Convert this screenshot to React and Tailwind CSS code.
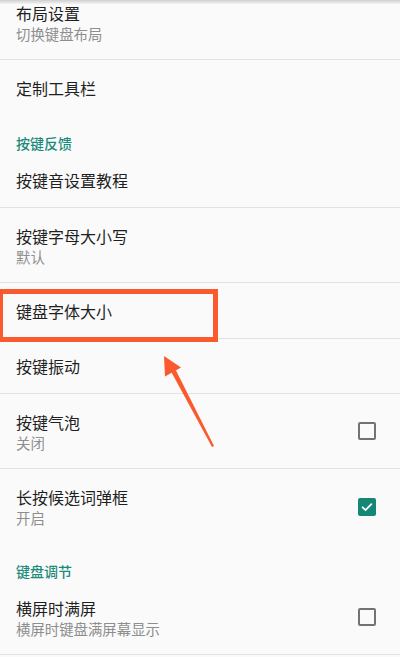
const font = { fontFamily: '"Noto Sans CJK SC", "Noto Sans", sans-serif' }

function Checkbox({ checked }) {
  if (checked) {
    return (
      <div className="flex h-[18px] w-[18px] items-center justify-center rounded-[2px] bg-[#168676]">
        <svg width="14" height="14" viewBox="0 0 24 24" fill="none">
          <path d="M4.5 12.5l5 5 10-10.5" stroke="#ffffff" strokeWidth="3" strokeLinecap="round" strokeLinejoin="round" />
        </svg>
      </div>
    )
  }
  return <div className="h-[18px] w-[18px] rounded-[2px] border-2 border-[#737373]" />
}

function Row({ title, sub, divider = true, check, tall }) {
  const base = divider ? 'border-b border-[#e2e2e2]' : ''
  if (sub) {
    return (
      <div className={`flex h-[75px] items-center pl-4 pr-6 ${base}`}>
        <div className="flex h-full min-w-0 flex-1 flex-col pt-[18px]">
          <div className="text-[16px] leading-[20px] text-[#1f1f1f]">{title}</div>
          <div className="mt-[2px] text-[14.4px] leading-[18px] text-[#8e8e8e]">{sub}</div>
        </div>
        {check !== undefined && <Checkbox checked={check} />}
      </div>
    )
  }
  return (
    <div className={`flex ${tall ? 'h-[56px]' : 'h-[55px]'} items-center pl-4 pr-6 ${base}`}>
      <div className="flex-1 text-[16px] leading-[20px] text-[#1f1f1f]">{title}</div>
    </div>
  )
}

function Header({ label, className }) {
  return (
    <div className={`${className} pl-4 text-[14px] font-medium leading-[16px] text-[#1a8a7b]`}>
      {label}
    </div>
  )
}

export default function App() {
  return (
    <div className="relative h-[657px] w-[400px] overflow-hidden bg-[#fafafa]" style={font}>
      <div className="mt-[-15px]">
        <Row title="布局设置" sub="切换键盘布局" />
        <Row title="定制工具栏" divider={false} />
        <Header label="按键反馈" className="h-[38px] pt-[20px]" />
        <Row title="按键音设置教程" />
        <Row title="按键字母大小写" sub="默认" />
        <Row title="键盘字体大小" tall />
        <Row title="按键振动" />
        <Row title="按键气泡" sub="关闭" check={false} />
        <Row title="长按候选词弹框" sub="开启" check divider={false} />
        <Header label="键盘调节" className="h-[36px] pt-[19px]" />
        <Row title="横屏时满屏" sub="横屏时键盘满屏幕显示" check={false} />
      </div>

      {/* top shadow */}
      <div className="absolute left-0 right-0 top-0 h-[4px] bg-gradient-to-b from-[#cfcfcf] to-[#f3f3f3]" />

      {/* highlight box */}
      <div className="absolute left-[-2px] top-[289px] h-[53px] w-[220px] border-[5px] border-[#fa5a2d]" />

      {/* arrow */}
      <svg className="absolute left-0 top-0" width="400" height="657" viewBox="0 0 400 657">
        <polygon points="164,356 181,367.5 165,376.5" fill="#fa5a2d" />
        <polygon points="170.5,370.5 175,368.5 214,446 212,447" fill="#fa5a2d" />
      </svg>
    </div>
  )
}
